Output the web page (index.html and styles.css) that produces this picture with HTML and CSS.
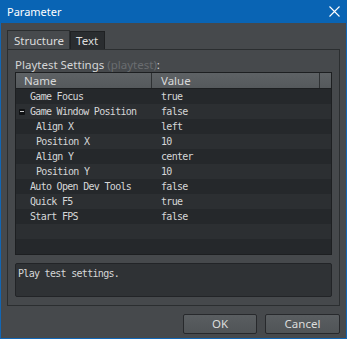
FILE: index.html
```html
<!DOCTYPE html>
<html lang="en">
<head>
    <meta charset="UTF-8">
    <title>Parameter</title>
    <link rel="stylesheet" href="styles.css">
</head>
<body>
<div class="window">
    <div class="titlebar">
        <span class="title">Parameter</span>
        <svg class="close" width="11" height="11" viewBox="0 0 11 11">
            <path d="M0.5 0.5 L10.5 10.5 M10.5 0.5 L0.5 10.5" stroke="#fff" stroke-width="1.1" fill="none"/>
        </svg>
    </div>
    <div class="content">
        <div class="tabs">
            <div class="tab active">Structure</div>
            <div class="tab">Text</div>
        </div>
        <div class="panel">
            <div class="label">Playtest Settings <span class="dim">(playtest)</span>:</div>
            <div class="tree">
                <div class="tree-head">
                    <div class="col-name">Name</div>
                    <div class="col-value">Value</div>
                    <div class="col-end"></div>
                </div>
                <div class="tree-body">
                    <div class="row"><span class="name lv1">Game Focus</span><span class="value">true</span></div>
                    <div class="row"><span class="toggle"></span><span class="name lv1">Game Window Position</span><span class="value">false</span></div>
                    <div class="row"><span class="name lv2">Align X</span><span class="value">left</span></div>
                    <div class="row"><span class="name lv2">Position X</span><span class="value">10</span></div>
                    <div class="row"><span class="name lv2">Align Y</span><span class="value">center</span></div>
                    <div class="row"><span class="name lv2">Position Y</span><span class="value">10</span></div>
                    <div class="row"><span class="name lv1">Auto Open Dev Tools</span><span class="value">false</span></div>
                    <div class="row"><span class="name lv1">Quick F5</span><span class="value">true</span></div>
                    <div class="row"><span class="name lv1">Start FPS</span><span class="value">false</span></div>
                </div>
            </div>
            <div class="description">Play test settings.</div>
        </div>
        <div class="buttons">
            <button class="btn ok">OK</button>
            <button class="btn cancel">Cancel</button>
        </div>
    </div>
</div>
</body>
</html>
```

FILE: styles.css
```css
html, body {
    margin: 0;
    padding: 0;
    background: #46494c;
}
.window {
    width: 347px;
    height: 339px;
    box-sizing: border-box;
    border: 1px solid #1266b4;
    border-top: none;
    background: #46494c;
    display: flex;
    flex-direction: column;
    font-family: "Noto Sans", "DejaVu Sans", sans-serif;
    color: #d9dadb;
}
.titlebar {
    height: 23px;
    background: #0964b4;
    margin: 0 -1px;
    padding: 0 7px;
    display: flex;
    align-items: center;
    justify-content: space-between;
}
.title {
    color: #fff;
    font-size: 11px;
    margin-top: -1px;
}
.content {
    flex: 1;
    padding: 7px 6px 0 6px;
    display: flex;
    flex-direction: column;
}
.tabs {
    display: flex;
    align-items: flex-end;
    height: 19px;
}
.tab {
    height: 18px;
    box-sizing: border-box;
    padding: 0 6px 0 5px;
    font-size: 11.5px;
    line-height: 17px;
    background: #2a2d30;
    border: 1px solid #1f2123;
    border-bottom: none;
    color: #dcdcdc;
}
.tab.active {
    height: 20px;
    margin-bottom: -1px;
    background: #474a4d;
    border-color: #2b2e30;
    padding: 0 5px 0 6px;
    line-height: 20px;
}
.panel {
    height: 257px;
    box-sizing: border-box;
    border: 1px solid #2b2e30;
    padding: 0 7px;
    display: flex;
    flex-direction: column;
}
.label {
    height: 15px;
    margin-top: 7px;
    font-size: 11.5px;
    line-height: 15px;
    color: #d5d6d7;
}
.dim {
    color: #6a6d70;
}
.tree {
    height: 183px;
    box-sizing: border-box;
    border: 1px solid #1d1f21;
    background: #25282b;
    display: flex;
    flex-direction: column;
}
.tree-head {
    height: 16px;
    box-sizing: border-box;
    display: flex;
    background: linear-gradient(#5e6265, #55595c);
    border-bottom: 1px solid #1d1f21;
    font-size: 11.5px;
    line-height: 15px;
    color: #d8d9da;
}
.col-name {
    width: 136px;
    padding-left: 8px;
    box-sizing: border-box;
    border-right: 1px solid #2e3133;
}
.col-value {
    width: 168px;
    padding-left: 9px;
    box-sizing: border-box;
    border-right: 1px solid #2e3133;
}
.col-end {
    flex: 1;
}
.tree-body {
    flex: 1;
    background: repeating-linear-gradient(#25282b 0, #25282b 15px, #2c2f32 15px, #2c2f32 30px);
    font-family: "DejaVu Sans Mono", monospace;
    font-size: 10px;
    letter-spacing: -0.7px;
    color: #d6d7d8;
}
.row {
    height: 15px;
    display: flex;
    align-items: center;
    position: relative;
}
.name {
    width: 145px;
    box-sizing: border-box;
    white-space: nowrap;
}
.name.lv1 {
    padding-left: 14px;
}
.name.lv2 {
    padding-left: 20px;
}
.toggle {
    position: absolute;
    left: 3px;
    top: 5px;
    width: 6px;
    height: 6px;
    background: #101214;
    border-radius: 1px;
}
.toggle::after {
    content: "";
    position: absolute;
    left: 1px;
    top: 2px;
    width: 4px;
    height: 1px;
    background: #c8c9ca;
}
.description {
    margin-top: 8px;
    height: 34px;
    box-sizing: border-box;
    border: 1px solid #222427;
    border-radius: 2px;
    background: #2f3235;
    padding: 4px 2px;
    font-family: "DejaVu Sans Mono", monospace;
    font-size: 10px;
    letter-spacing: -0.7px;
    color: #d6d7d8;
}
.buttons {
    display: flex;
    justify-content: flex-end;
    gap: 8px;
    margin-top: 8px;
}
.btn {
    height: 20px;
    box-sizing: border-box;
    border: 1px solid #27292c;
    border-radius: 2px;
    background: linear-gradient(#5a5e61, #505457);
    color: #dcdddd;
    font-family: "Noto Sans", "DejaVu Sans", sans-serif;
    font-size: 11.5px;
    padding: 0;
    line-height: 18px;
}
.btn.ok {
    width: 74px;
}
.btn.cancel {
    width: 75px;
}
```
